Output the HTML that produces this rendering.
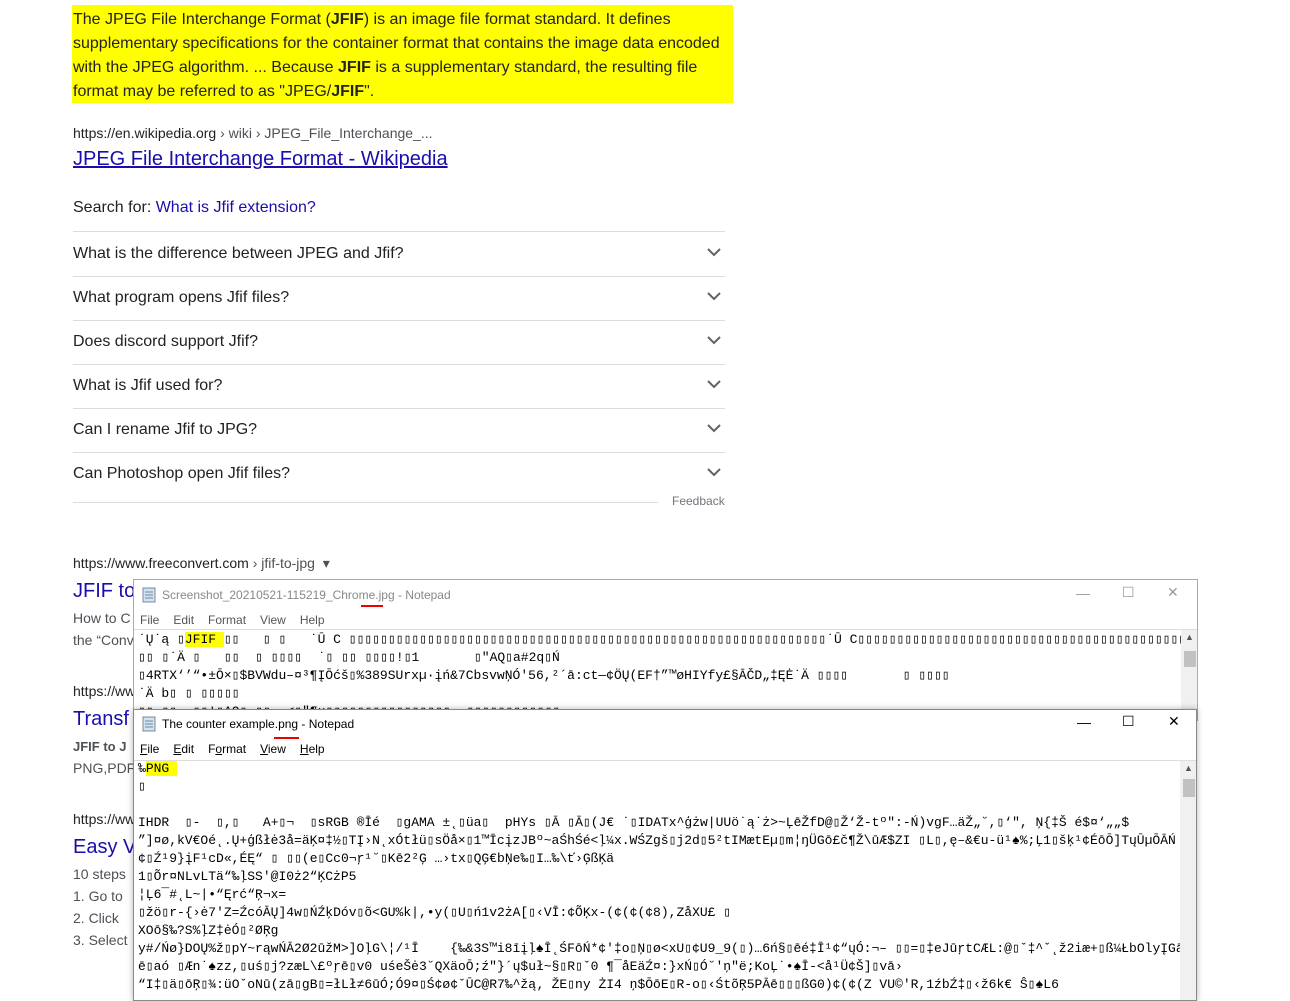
<!DOCTYPE html>
<html><head><meta charset="utf-8"><style>
body{margin:0;width:1290px;height:986px;overflow:hidden;background:#fff;font-family:"Liberation Sans",Arial,sans-serif;position:relative}
.a{position:absolute;white-space:nowrap}
.hl{left:72px;top:5px;width:661px;height:98px;background:#ffff00;font-size:16px;line-height:24px;color:#222;padding:0;}
.hl div{position:absolute;left:1px;top:3px;width:660px;white-space:normal}
.q{position:absolute;left:73px;width:652px;height:44px;border-bottom:1px solid #dadce0;font-size:16px;color:#202124;line-height:44px}
.q svg{position:absolute;right:4px;top:16px}
.lnk{color:#1a0dab}
.gray{color:#4d5156}
.win{position:absolute;background:#fff;border:1px solid #aaa;overflow:hidden;font-family:"Liberation Sans",Arial,sans-serif}
.tt{position:absolute;left:28px;font-size:12px}
.menu{position:absolute;left:6px;font-size:12px;color:#000}
.menu span{margin-right:14px}
.txt{position:absolute;left:4px;font-family:"Liberation Mono","DejaVu Sans Mono",monospace;font-size:13px;line-height:18px;white-space:pre;color:#000}
.sb{position:absolute;right:0;width:16px;background:#f0f0f0}
.ctl{position:absolute;font-size:14px;color:#333}
</style></head><body>
<div class="a hl"><div>The JPEG File Interchange Format (<b>JFIF</b>) is an image file format standard. It defines supplementary specifications for the container format that contains the image data encoded with the JPEG algorithm. ... Because <b>JFIF</b> is a supplementary standard, the resulting file format may be referred to as "JPEG/<b>JFIF</b>".</div></div>
<div class="a gray" style="left:73px;top:125px;font-size:14px;color:#202124">https://en.wikipedia.org <span class="gray">› wiki › JPEG_File_Interchange_...</span></div>
<div class="a lnk" style="left:73px;top:148px;font-size:20px;text-decoration:underline">JPEG File Interchange Format - Wikipedia</div>
<div class="a" style="left:73px;top:199px;font-size:16px;color:#202124">Search for: <span class="lnk">What is Jfif extension?</span></div>
<div class="q" style="top:231px;border-top:1px solid #dadce0">What is the difference between JPEG and Jfif?<svg width="14" height="9"><path d="M1 1l6 6 6-6" stroke="#5f6368" stroke-width="2" fill="none"/></svg></div>
<div class="q" style="top:276px">What program opens Jfif files?<svg width="14" height="9"><path d="M1 1l6 6 6-6" stroke="#5f6368" stroke-width="2" fill="none"/></svg></div>
<div class="q" style="top:320px">Does discord support Jfif?<svg width="14" height="9"><path d="M1 1l6 6 6-6" stroke="#5f6368" stroke-width="2" fill="none"/></svg></div>
<div class="q" style="top:364px">What is Jfif used for?<svg width="14" height="9"><path d="M1 1l6 6 6-6" stroke="#5f6368" stroke-width="2" fill="none"/></svg></div>
<div class="q" style="top:408px">Can I rename Jfif to JPG?<svg width="14" height="9"><path d="M1 1l6 6 6-6" stroke="#5f6368" stroke-width="2" fill="none"/></svg></div>
<div class="q" style="top:452px;border-bottom:none">Can Photoshop open Jfif files?<svg width="14" height="9"><path d="M1 1l6 6 6-6" stroke="#5f6368" stroke-width="2" fill="none"/></svg></div>
<div class="a" style="left:73px;top:502px;width:585px;border-top:1px solid #dadce0"></div>
<div class="a" style="left:672px;top:494px;font-size:12px;color:#70757a">Feedback</div>
<div class="a" style="left:73px;top:555px;font-size:14px;color:#202124">https://www.freeconvert.com <span class="gray">› jfif-to-jpg &nbsp;▾</span></div>
<div class="a lnk" style="left:73px;top:580px;font-size:20px">JFIF to</div>
<div class="a gray" style="left:73px;top:610px;font-size:14px">How to C</div>
<div class="a gray" style="left:73px;top:632px;font-size:14px">the “Conv</div>
<div class="a" style="left:73px;top:683px;font-size:14px;color:#202124">https://ww</div>
<div class="a lnk" style="left:73px;top:708px;font-size:20px">Transf</div>
<div class="a gray" style="left:73px;top:739px;font-size:13px"><b>JFIF to J</b></div>
<div class="a gray" style="left:73px;top:760px;font-size:14px">PNG,PDF</div>
<div class="a" style="left:73px;top:811px;font-size:14px;color:#202124">https://ww</div>
<div class="a lnk" style="left:73px;top:836px;font-size:20px">Easy V</div>
<div class="a gray" style="left:73px;top:866px;font-size:14px">10 steps</div>
<div class="a gray" style="left:73px;top:888px;font-size:14px">1. Go to</div>
<div class="a gray" style="left:73px;top:910px;font-size:14px">2. Click</div>
<div class="a gray" style="left:73px;top:932px;font-size:14px">3. Select</div>

<div class="win" style="left:133px;top:579px;width:1063px;height:140px">
<svg class="a" style="left:8px;top:7px" width="14" height="16"><rect x="1" y="1" width="12" height="14" fill="#cfe3f2" stroke="#7a8a99"/><path d="M3 5h8M3 8h8M3 11h8" stroke="#7a8a99"/></svg>
<div class="tt" style="top:8px;color:#888">Screenshot_20210521-115219_Chrome.jpg - Notepad</div>
<div class="a" style="left:227px;top:25px;width:22px;height:2px;background:#e00"></div>
<div class="ctl" style="left:942px;top:5px;color:#999">—</div>
<div class="ctl" style="left:988px;top:4px;color:#999">☐</div>
<div class="ctl" style="left:1033px;top:4px;color:#999">✕</div>
<div class="menu" style="top:33px;color:#555"><span>File</span><span>Edit</span><span>Format</span><span>View</span><span>Help</span></div>
<div class="a" style="left:0;top:49px;width:1063px;border-top:1px solid #ddd"></div>
<div class="txt" style="top:51px">˙Ų˙ą ▯<span style="background:#ff0">JFIF </span>▯▯   ▯ ▯   ˙Ū C ▯▯▯▯▯▯▯▯▯▯▯▯▯▯▯▯▯▯▯▯▯▯▯▯▯▯▯▯▯▯▯▯▯▯▯▯▯▯▯▯▯▯▯▯▯▯▯▯▯▯▯▯▯▯▯▯▯▯▯▯▯˙Ū C▯▯▯▯▯▯▯▯▯▯▯▯▯▯▯▯▯▯▯▯▯▯▯▯▯▯▯▯▯▯▯▯▯▯▯▯▯▯▯▯▯▯▯▯▯▯▯▯▯▯▯▯▯▯▯▯▯▯▯▯▯▯˙Ą ▯▯€▯°▯"  ▯▯▯˙Ä  ▯ ▯ ▯▯         ▯▯▯
▯▯ ▯˙Ä ▯   ▯▯  ▯ ▯▯▯▯  ˙▯ ▯▯ ▯▯▯▯!▯1       ▯"AQ▯a#2q▯Ń
▯4RTX‘’“•±Ō×▯$BVWdu–¤³¶ĮŌćš▯%389SUrxµ·įń&amp;7CbsvwŅÓ'56,²´ā:ct—¢ÖŲ(EF†”™øHIYfy£§ĀČD„‡ĘĖ˙Ä ▯▯▯▯       ▯ ▯▯▯▯
˙Ä b▯ ▯ ▯▯▯▯▯
▯▯ ▯▯  ▯▯!▯AQ▯ ▯▯  &lt;▯"¶×▯▯▯▯▯▯▯▯▯▯▯▯▯▯▯▯  ▯▯▯▯▯▯▯▯▯▯▯▯</div>
<div class="sb" style="top:50px;height:90px"><div style="position:absolute;left:3px;top:21px;width:12px;height:16px;background:#c1c1c1"></div><div style="position:absolute;left:4px;top:2px;font-size:9px;color:#555">▲</div></div>
</div>

<div class="win" style="left:133px;top:709px;width:1062px;height:290px;border-color:#888;box-shadow:0 0 6px rgba(0,0,0,.3)">
<svg class="a" style="left:8px;top:6px" width="14" height="16"><rect x="1" y="1" width="12" height="14" fill="#cfe3f2" stroke="#7a8a99"/><path d="M3 5h8M3 8h8M3 11h8" stroke="#7a8a99"/></svg>
<div class="tt" style="top:7px;color:#000">The counter example.png - Notepad</div>
<div class="a" style="left:140px;top:27px;width:25px;height:2px;background:#e00"></div>
<div class="ctl" style="left:943px;top:4px;color:#000">—</div>
<div class="ctl" style="left:988px;top:3px;color:#000">☐</div>
<div class="ctl" style="left:1034px;top:3px;color:#000">✕</div>
<div class="menu" style="top:32px"><span><u>F</u>ile</span><span><u>E</u>dit</span><span>F<u>o</u>rmat</span><span><u>V</u>iew</span><span><u>H</u>elp</span></div>
<div class="a" style="left:0;top:50px;width:1062px;border-top:1px solid #ddd"></div>
<div class="txt" style="top:50px">‰<span style="background:#ff0">PNG </span>
▯

IHDR  ▯-  ▯,▯   A+▯¬  ▯sRGB ®Īé  ▯gAMA ±˛▯üa▯  pHYs ▯Ā ▯Ā▯(J€ ˙▯IDATx^ģżw|UUö˙ą˙ż>~ĻēŽfD@▯Ž‘Ž-tº":-Ń)vgF…äŽ„˘,▯‘", Ņ{‡Š é$¤‘„„$
”]¤ø,kV€Oé˛.Ų+ģßłė3å=äĶ¤‡½▯TĮ›N˛xÓtłü▯sÖå×▯1™ĪcįzJBº~aŚhŚé&lt;ļ¼x.WŚZgš▯j2d▯5²tIMætEµ▯m¦ŋÜGō£č¶Ž\ūÆ$ZI ▯L▯,ę–&amp;€u-ü¹♠%;Ļ1▯šķ¹¢ÉōŌ]TųŪµŌĀŃ
¢▯Ź¹9}įF¹cD«,ÉĘ“ ▯ ▯▯(e▯Cc0¬ŗ¹˘▯Kē2²Ģ …›tx▯QĢ€bŅe‰▯I…‰\ť›ĢßĶä
1▯Õr¤NLvLTä“‰ļSS'@I0ż2“ĶCżP5
¦Ļ6¯#˛L~|•“Ęrć“Ŗ¬x=
▯žö▯r-{›ė7'Z=ŹcóĀŲ]4w▯ŃŹķDóv▯õ&lt;GU%k|,•y(▯U▯ń1v2żA[▯‹VĪ:¢ÕĶx-(¢(¢(¢8),ZåXU£ ▯
XOō§‰?S%ļZ‡ėÓ▯²ØŖg
y#/Ńø}DOŲ%ž▯pY~rąwŃĀ2Ø2ūžM>]OļG\¦/¹Ī    {‰&amp;3S™i8īįļ♠Ī˛ŚFōŃ*¢'‡o▯Ņ▯ø&lt;xU▯¢U9_9(▯)…6ń§▯ēé‡Ī¹¢“ųÓ:¬– ▯▯=▯‡eJūŗtCÆL:@▯ˇ‡^ˇ˛ž2iæ+▯ß¼ŁbOlyĮGā
ē▯aó ▯Æn˙♠zz,▯uś▯j?zæL\£ºŗē▯v0 uśeŠė3˘QXäoŌ;ź"}´ų$uł~§▯R▯ˇ0 ¶¯åEäŹ¤:}xŃ▯Ó˘'ņ"ë;KoĻ˙•♠Ī-&lt;å¹Ü¢Š]▯vā›
“I‡▯ä▯ōŖ▯¾:üOˇoNū(zā▯gB▯=łLł≠6ūÓ;Ó9¤▯Ś¢ø¢ˇŪC@R7‰^žą‚ ŽE▯ny ŻI4 ņ$ŌōE▯R-o▯‹ŚtõŖ5PĀē▯▯▯ßG0)¢(¢(Z VU©'R,1źbŹ‡▯‹ž6k€ Ŝ▯♠L6</div>
<div class="sb" style="top:51px;height:240px"><div style="position:absolute;left:3px;top:18px;width:12px;height:18px;background:#c1c1c1"></div><div style="position:absolute;left:4px;top:2px;font-size:9px;color:#555">▲</div></div>
</div>
</body></html>
